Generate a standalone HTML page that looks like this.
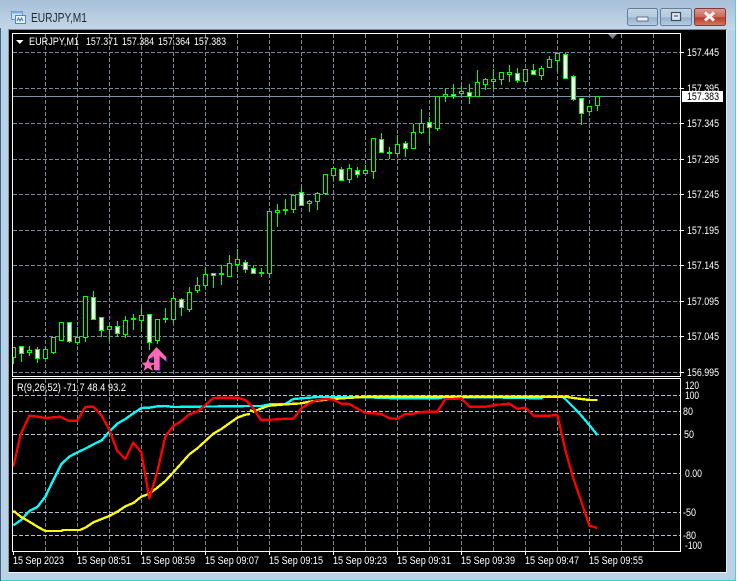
<!DOCTYPE html>
<html><head><meta charset="utf-8"><title>EURJPY,M1</title>
<style>
html,body{margin:0;padding:0;background:#fff;width:738px;height:581px;overflow:hidden}
svg{display:block;position:absolute;left:0;top:0}
text{font-family:"Liberation Sans",sans-serif;font-size:11px;fill:#fff}
</style></head><body>
<svg width="738" height="581" viewBox="0 0 738 581" xmlns="http://www.w3.org/2000/svg">
<defs>
<linearGradient id="tb" x1="0" y1="0" x2="0" y2="1"><stop offset="0" stop-color="#a6bfd8"/><stop offset="1" stop-color="#c6d7e7"/></linearGradient>
<linearGradient id="bt" x1="0" y1="0" x2="0" y2="1"><stop offset="0" stop-color="#c5d6e6"/><stop offset=".5" stop-color="#b4cadf"/><stop offset=".55" stop-color="#96b2cd"/><stop offset="1" stop-color="#b5cde2"/></linearGradient>
<linearGradient id="cl" x1="0" y1="0" x2="0" y2="1"><stop offset="0" stop-color="#dc9c90"/><stop offset=".5" stop-color="#c8685a"/><stop offset=".55" stop-color="#b83c2c"/><stop offset="1" stop-color="#cf7a62"/></linearGradient>
<clipPath id="m"><rect x="13" y="34" width="667" height="342"/></clipPath>
<clipPath id="s"><rect x="13" y="379" width="667" height="172"/></clipPath>
</defs>
<!-- frame -->
<path d="M0 4Q0 0 4 0H731Q735 0 735 4V581H0Z" fill="#b9d2e8"/>
<rect x="0" y="0" width="735" height="30" fill="url(#tb)"/>
<rect x="735" y="0" width="1" height="581" fill="#5cc9d6"/>
<rect x="0" y="580" width="736" height="1" fill="#45c8d2"/>
<rect x="0" y="28" width="1" height="553" fill="#47627e"/>
<rect x="8" y="29" width="719" height="1" fill="#7b8a99"/>
<rect x="8" y="30" width="1" height="542" fill="#8b9aa8"/>
<rect x="9" y="30" width="717" height="542" fill="#000"/>
<rect x="8" y="572" width="719" height="1" fill="#eef3f8"/>
<rect x="726" y="30" width="1" height="543" fill="#e6edf4"/>
<!-- icon -->
<g stroke-width="1">
<rect x="11.500" y="11.500" width="11" height="8" fill="#cfe3f8" stroke="#5f93cc"/>
<rect x="11.500" y="11.500" width="11" height="2" fill="#7fb0e4" stroke="none"/>
<rect x="15.500" y="15.500" width="10" height="8" fill="#eaf4ff" stroke="#4f88c6"/>
<path d="M17 21l1.500-3 1.500 3 1.500-3 1.500 3" fill="none" stroke="#3a78c0"/>
</g>
<text x="31" y="22" textLength="56" lengthAdjust="spacingAndGlyphs" style="font-size:13px;fill:#1c2b3c">EURJPY,M1</text>
<!-- buttons -->
<rect x="627.500" y="8.500" width="30" height="17" rx="2" fill="url(#bt)" stroke="#65809c"/>
<rect x="637" y="17" width="11" height="4" fill="#eef2f6" stroke="#4b5c70" stroke-width=".8"/>
<rect x="660.500" y="8.500" width="31" height="17" rx="2" fill="url(#bt)" stroke="#65809c"/>
<rect x="671.500" y="12.500" width="9" height="8" fill="#dfe7ef" stroke="#3e4e60" stroke-width="1.200"/>
<rect x="674" y="15" width="4" height="2" fill="#7d93aa"/>
<rect x="694.500" y="8.500" width="31" height="17" rx="2" fill="url(#cl)" stroke="#7c3a40"/>
<path d="M705 12.500l9 8M714 12.500l-9 8" stroke="#f2f2f2" stroke-width="3"/>

<!-- main grid -->
<g stroke="#778899" stroke-width="1" stroke-dasharray="4 2" fill="none" shape-rendering="crispEdges" clip-path="url(#m)">
<path d="M13 52.500H680M13 88.500H680M13 123.500H680M13 159.500H680M13 194.500H680M13 230.500H680M13 265.500H680M13 301.500H680M13 336.500H680M13 372.500H680"/>
<path d="M45.500 34V376M77.500 34V376M109.500 34V376M141.500 34V376M173.500 34V376M205.500 34V376M237.500 34V376M269.500 34V376M301.500 34V376M333.500 34V376M365.500 34V376M397.500 34V376M429.500 34V376M461.500 34V376M493.500 34V376M525.500 34V376M557.500 34V376M589.500 34V376M621.500 34V376M653.500 34V376"/>
</g>
<rect x="13" y="96" width="667" height="1" fill="#8090a4"/>
<!-- candles -->
<g clip-path="url(#m)" shape-rendering="crispEdges">
<path fill="none" stroke="#00ff00" d="M13.500 347V364M21.500 346V362M29.500 346V356M37.500 347V363M45.500 346V359M53.500 337V354M61.500 322V341M69.500 322V343M77.500 327V345M85.500 296V342M93.500 291V319M101.500 317V337M109.500 326V341M117.500 321V337M125.500 316V338M133.500 314V330M141.500 308V332M149.500 314V350M157.500 319V344M165.500 308V323M173.500 295V323M181.500 298V316M189.500 287V312M197.500 277V293M205.500 267V288M213.500 273V288M221.500 265V285M229.500 255V276M237.500 249V272M245.500 260V273M253.500 266V274M261.500 268V277M269.500 211V277M277.500 204V227M285.500 199V215M293.500 194V213M301.500 187V205M309.500 200V212M317.500 192V210M325.500 174V195M333.500 167V180M341.500 167V180M349.500 164V183M357.500 167V178M365.500 165V174M373.500 138V179M381.500 133V153M389.500 147V159M397.500 135V156M405.500 141V157M413.500 124V148M421.500 109V134M429.500 117V144M437.500 96V131M445.500 88V102M453.500 84V99M461.500 86V96M469.500 84V104M477.500 70V96M485.500 78V90M493.500 69V89M501.500 72V85M509.500 65V82M517.500 68V83M525.500 69V84M533.500 64V74M541.500 66V80M549.500 56V67M557.500 53V72M565.500 53V79M573.500 75V101M581.500 98V125M589.500 106V116M597.500 96V111"/>
<path fill="#000" stroke="#00ff00" d="M11.500 347.500h4v10h-4zM27.500 350.500h4v2h-4zM43.500 349.500h4v9h-4zM51.500 337.500h4v15h-4zM59.500 322.500h4v18h-4zM75.500 337.500h4v5h-4zM83.500 296.500h4v41h-4zM107.500 326.500h4v3h-4zM123.500 320.500h4v14h-4zM131.500 318.500h4v1h-4zM139.500 315.500h4v5h-4zM155.500 319.500h4v21h-4zM163.500 318.500h4v1h-4zM171.500 298.500h4v21h-4zM187.500 292.500h4v17h-4zM195.500 285.500h4v5h-4zM203.500 274.500h4v11h-4zM219.500 273.500h4v1h-4zM227.500 263.500h4v13h-4zM235.500 259.500h4v5h-4zM259.500 272.500h4v1h-4zM267.500 211.500h4v62h-4zM275.500 210.500h4v2h-4zM283.500 209.500h4v1h-4zM291.500 195.500h4v14h-4zM307.500 201.500h4v2h-4zM315.500 193.500h4v8h-4zM323.500 174.500h4v19h-4zM331.500 168.500h4v7h-4zM347.500 168.500h4v11h-4zM363.500 170.500h4v3h-4zM371.500 138.500h4v33h-4zM387.500 152.500h4v1h-4zM395.500 144.500h4v9h-4zM411.500 132.500h4v16h-4zM419.500 123.500h4v9h-4zM435.500 96.500h4v32h-4zM443.500 94.500h4v2h-4zM459.500 91.500h4v2h-4zM475.500 82.500h4v14h-4zM483.500 79.500h4v5h-4zM491.500 79.500h4v2h-4zM499.500 72.500h4v7h-4zM507.500 72.500h4v2h-4zM523.500 69.500h4v12h-4zM539.500 68.500h4v7h-4zM547.500 59.500h4v8h-4zM555.500 53.500h4v7h-4zM587.500 106.500h4v5h-4zM595.500 96.500h4v9h-4z"/>
<path fill="#fff" stroke="#00ff00" d="M19.500 346.500h4v7h-4zM35.500 349.500h4v9h-4zM67.500 322.500h4v19h-4zM91.500 297.500h4v22h-4zM99.500 317.500h4v13h-4zM115.500 326.500h4v7h-4zM147.500 314.500h4v28h-4zM179.500 299.500h4v8h-4zM211.500 273.500h4v2h-4zM243.500 262.500h4v7h-4zM251.500 268.500h4v5h-4zM299.500 192.500h4v13h-4zM339.500 169.500h4v11h-4zM355.500 170.500h4v4h-4zM379.500 139.500h4v13h-4zM403.500 143.500h4v5h-4zM427.500 122.500h4v5h-4zM451.500 94.500h4v2h-4zM467.500 92.500h4v4h-4zM515.500 73.500h4v7h-4zM531.500 70.500h4v4h-4zM563.500 54.500h4v24h-4zM571.500 76.500h4v23h-4zM579.500 98.500h4v15h-4z"/>
</g>
<!-- chart shift -->
<path d="M608 34H617L612.500 39Z" fill="#778899"/>
<!-- arrow and star -->
<path d="M157.500 348L167.500 358V362.500L160.500 357V371.500H155V358L149 362Z" fill="#2a2a8a"/>
<path d="M156.500 347L166 357V361L159.500 356V370H154V356L148 360V356.500Z" fill="#ff69b4"/>
<path d="M148 358L149.800 362.500L156 363L151 366L153 371L148 368L143.500 371L145 366L141.500 362.800L146.200 362.500Z" fill="#ff69b4"/>
<!-- panes -->
<g fill="none" stroke="#fff" shape-rendering="crispEdges">
<rect x="12.500" y="33.500" width="668" height="343"/>
<rect x="12.500" y="378.500" width="668" height="173"/>
<path d="M681 52.500h3M681 88.500h3M681 123.500h3M681 159.500h3M681 194.500h3M681 230.500h3M681 265.500h3M681 301.500h3M681 336.500h3M681 372.500h3"/>
<path d="M13.500 552v3M77.500 552v3M141.500 552v3M205.500 552v3M269.500 552v3M333.500 552v3M397.500 552v3M461.500 552v3M525.500 552v3M589.500 552v3"/>
</g>
<!-- header text -->
<path d="M16 40H23.500L19.750 44Z" fill="#fff"/>
<text x="29" y="45" textLength="50" lengthAdjust="spacingAndGlyphs">EURJPY,M1</text>
<text x="86" y="45" textLength="32" lengthAdjust="spacingAndGlyphs">157.371</text>
<text x="122" y="45" textLength="32" lengthAdjust="spacingAndGlyphs">157.384</text>
<text x="158" y="45" textLength="32" lengthAdjust="spacingAndGlyphs">157.364</text>
<text x="194" y="45" textLength="32" lengthAdjust="spacingAndGlyphs">157.383</text>
<!-- price labels -->
<g>
<text x="687" y="56" textLength="32" lengthAdjust="spacingAndGlyphs">157.445</text>
<text x="687" y="92" textLength="32" lengthAdjust="spacingAndGlyphs">157.395</text>
<text x="687" y="127" textLength="32" lengthAdjust="spacingAndGlyphs">157.345</text>
<text x="687" y="163" textLength="32" lengthAdjust="spacingAndGlyphs">157.295</text>
<text x="687" y="198" textLength="32" lengthAdjust="spacingAndGlyphs">157.245</text>
<text x="687" y="234" textLength="32" lengthAdjust="spacingAndGlyphs">157.195</text>
<text x="687" y="269" textLength="32" lengthAdjust="spacingAndGlyphs">157.145</text>
<text x="687" y="305" textLength="32" lengthAdjust="spacingAndGlyphs">157.095</text>
<text x="687" y="340" textLength="32" lengthAdjust="spacingAndGlyphs">157.045</text>
<text x="687" y="376" textLength="32" lengthAdjust="spacingAndGlyphs">156.995</text>
</g>
<rect x="682" y="91" width="41" height="11" fill="#fff"/>
<text x="687" y="100" textLength="32" lengthAdjust="spacingAndGlyphs" style="fill:#000">157.383</text>
<!-- sub pane grid -->
<g fill="none" stroke-width="1" stroke-dasharray="4 2" shape-rendering="crispEdges" clip-path="url(#s)">
<path stroke="#778899" d="M45.500 379V551M77.500 379V551M109.500 379V551M141.500 379V551M173.500 379V551M205.500 379V551M237.500 379V551M269.500 379V551M301.500 379V551M333.500 379V551M365.500 379V551M397.500 379V551M429.500 379V551M461.500 379V551M493.500 379V551M525.500 379V551M557.500 379V551M589.500 379V551M621.500 379V551M653.500 379V551"/>
<path stroke="#b9bfc8" d="M13 395.500H680M13 411.500H680M13 434.500H680M13 473.500H680M13 512.500H680M13 535.500H680"/>
</g>
<!-- indicator lines -->
<g fill="none" stroke-width="7" stroke-linejoin="round" shape-rendering="crispEdges" clip-path="url(#s)">
<g transform="translate(0,375) scale(.33333)" stroke="#00ffff"><polyline points="40,451 62,436 88,408 112,396 136,365 160,315 184,267 208,245 232,232 256,221 280,208 305,196 328,170 352,146 376,132 400,115 424,99 448,98 472,94 496,93 520,96 750,93"/></g>
<g transform="translate(240,375) scale(.33333)" stroke="#00ffff"><polyline points="30,93 64,93 88,88 136,87 160,72 208,68 232,66 352,66 470,70 592,70 610,67 750,67"/></g>
<g transform="translate(488,375) scale(.33333)" stroke="#00ffff"><polyline points="6,67 160,70 163,66 225,66 232,72 256,96 280,122 304,150 328,180"/></g>
<g transform="translate(0,375) scale(.33333)" stroke="#ffff00"><polyline points="40,407 62,425 88,440 112,455 136,468 184,468 190,465 240,465 256,458 280,442 305,432 328,423 352,410 376,394 400,384 424,365 448,356 472,338 496,318 520,292 544,265 568,238 592,220 616,198 640,176 664,162 688,145 712,128 736,119 750,117"/></g>
<g transform="translate(240,375) scale(.33333)" stroke="#ffff00"><polyline points="30,105 40,110 64,100 88,92 136,88 184,85 208,80 232,77 280,72 304,70 352,67 376,65 750,65"/></g>
<g transform="translate(488,375) scale(.33333)" stroke="#ffff00"><polyline points="6,65 232,65 256,69 280,72 304,75 328,75"/></g>
<g transform="translate(0,375) scale(.33333)" stroke="#ff0000"><polyline points="40,275 62,178 88,122 112,125 136,129 160,127 180,125 205,137 232,137 256,96 280,95 305,122 328,165 352,228 376,252 400,203 424,232 448,370 472,290 496,184 520,153 544,138 568,118 592,110 616,90 640,69 664,68 688,68 712,68 736,75 750,88"/></g>
<g transform="translate(240,375) scale(.33333)" stroke="#ff0000"><polyline points="30,88 40,100 62,134 88,134 112,133 136,131 160,131 184,100 208,85 232,75 256,72 280,74 304,86 328,87 352,101 376,114 400,115 424,117 448,130 472,131 496,117 520,116 544,111 568,110 592,110 616,72 640,72 664,70 688,95 712,95 736,95 750,93"/></g>
<g transform="translate(488,375) scale(.33333)" stroke="#ff0000"><polyline points="6,93 24,89 48,88 64,86 88,102 112,98 136,122 160,122 184,122 208,120 232,225 256,310 280,380 304,452 328,459"/></g>
</g>
<!-- sub label -->
<text x="17" y="391" textLength="109" lengthAdjust="spacingAndGlyphs">R(9,26,52) -71.7 48.4 93.2</text>
<!-- sub axis -->
<text x="685" y="389" textLength="14" lengthAdjust="spacingAndGlyphs">120</text>
<text x="685" y="399" textLength="14" lengthAdjust="spacingAndGlyphs">100</text>
<text x="683" y="415" textLength="10" lengthAdjust="spacingAndGlyphs">80</text>
<text x="684" y="438" textLength="10" lengthAdjust="spacingAndGlyphs">50</text>
<text x="685" y="477" textLength="17" lengthAdjust="spacingAndGlyphs">0.00</text>
<text x="683" y="516" textLength="13" lengthAdjust="spacingAndGlyphs">-50</text>
<text x="683" y="539" textLength="13" lengthAdjust="spacingAndGlyphs">-80</text>
<text x="685" y="549" textLength="17" lengthAdjust="spacingAndGlyphs">-100</text>
<!-- time axis -->
<text x="13" y="564" textLength="51" lengthAdjust="spacingAndGlyphs">15 Sep 2023</text>
<text x="77" y="564" textLength="54" lengthAdjust="spacingAndGlyphs">15 Sep 08:51</text>
<text x="141" y="564" textLength="54" lengthAdjust="spacingAndGlyphs">15 Sep 08:59</text>
<text x="205" y="564" textLength="54" lengthAdjust="spacingAndGlyphs">15 Sep 09:07</text>
<text x="269" y="564" textLength="54" lengthAdjust="spacingAndGlyphs">15 Sep 09:15</text>
<text x="333" y="564" textLength="54" lengthAdjust="spacingAndGlyphs">15 Sep 09:23</text>
<text x="397" y="564" textLength="54" lengthAdjust="spacingAndGlyphs">15 Sep 09:31</text>
<text x="461" y="564" textLength="54" lengthAdjust="spacingAndGlyphs">15 Sep 09:39</text>
<text x="525" y="564" textLength="54" lengthAdjust="spacingAndGlyphs">15 Sep 09:47</text>
<text x="589" y="564" textLength="54" lengthAdjust="spacingAndGlyphs">15 Sep 09:55</text>
</svg>
</body></html>
